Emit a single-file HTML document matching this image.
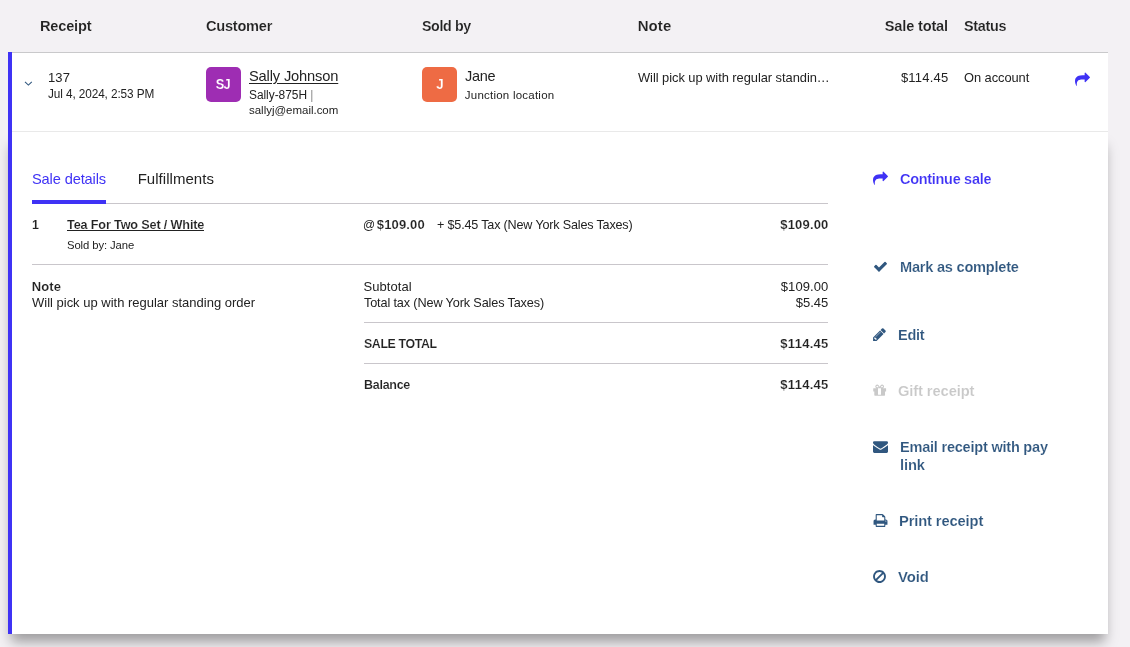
<!DOCTYPE html>
<html lang="en">
<head>
<meta charset="utf-8">
<title>Sales history</title>
<style>
html,body{margin:0;padding:0;}
body{width:1130px;height:647px;overflow:hidden;background:#f3f1f4;position:relative;font-family:"Liberation Sans",Arial,sans-serif;}
.t{position:absolute;white-space:pre;line-height:20px;height:20px;}
.abs{position:absolute;}
.hline{position:absolute;height:1px;background:#c9c6cb;}
svg{position:absolute;overflow:visible;}
</style>
</head>
<body>
<!-- header bottom border -->
<div class="abs" style="left:8px;top:52px;width:1100px;height:1px;background:#c9c9cb;"></div>
<!-- detail panel with shadow -->
<div class="abs" style="left:8px;top:132px;width:1100px;height:502px;background:#fff;box-shadow:0 11px 12px -3px rgba(0,0,0,.35);"></div>
<!-- row -->
<div class="abs" style="left:8px;top:53px;width:1100px;height:79px;background:#fff;"></div>
<div class="abs" style="left:12px;top:131px;width:1096px;height:1px;background:#e9e9e9;"></div>
<!-- blue bar -->
<div class="abs" style="left:8px;top:52px;width:4px;height:582px;background:#3f32f5;"></div>

<!-- chevron -->
<svg style="left:24px;top:80px;" width="9" height="7" viewBox="0 0 9 7"><polyline points="1.0,1.9 4.4,5.1 7.8,1.9" fill="none" stroke="#30577f" stroke-width="1.1"/></svg>

<!-- avatars -->
<div class="abs" style="left:206px;top:67px;width:35px;height:35px;border-radius:5px;background:#9e2db3;"></div>
<div class="abs" style="left:422px;top:67px;width:35px;height:35px;border-radius:5px;background:#ee6b44;"></div>

<!-- tab underline + lines -->
<div class="hline" style="left:32px;top:203px;width:796px;"></div>
<div class="abs" style="left:32px;top:200px;width:74px;height:4px;background:#3f32f5;"></div>
<div class="hline" style="left:32px;top:264px;width:796px;"></div>
<div class="hline" style="left:364px;top:322px;width:464px;"></div>
<div class="hline" style="left:364px;top:363px;width:464px;"></div>

<div class="abs" style="left:67px;top:230px;width:137px;height:1px;background:#222;"></div>
<!-- icons -->
<!-- share (row) -->
<svg style="left:1075px;top:72px;" width="15" height="15" viewBox="0 0 1792 1792"><path fill="#3f32f5" d="M1792 640q0 26-19 45l-512 512q-19 19-45 19t-45-19-19-45v-256h-224q-98 0-175.500 6t-154 21.500-133 42.500-105.500 69.500-80 101-48.500 138.500-17.500 181q0 55 5 123 0 6 2.500 23.500t2.500 26.500q0 15-8.500 25t-23.500 10q-16 0-28-17-7-9-13-22t-13.500-30-10.500-24q-127-285-127-451 0-199 53-333 162-403 875-403h224v-256q0-26 19-45t45-19 45 19l512 512q19 19 19 45z"/></svg>
<!-- share (continue sale) -->
<svg style="left:873px;top:171px;" width="15" height="15" viewBox="0 0 1792 1792"><path fill="#3f32f5" d="M1792 640q0 26-19 45l-512 512q-19 19-45 19t-45-19-19-45v-256h-224q-98 0-175.500 6t-154 21.500-133 42.500-105.500 69.500-80 101-48.500 138.500-17.500 181q0 55 5 123 0 6 2.500 23.500t2.500 26.500q0 15-8.500 25t-23.500 10q-16 0-28-17-7-9-13-22t-13.500-30-10.500-24q-127-285-127-451 0-199 53-333 162-403 875-403h224v-256q0-26 19-45t45-19 45 19l512 512q19 19 19 45z"/></svg>
<!-- check -->
<svg style="left:873px;top:259px;" width="15" height="15" viewBox="0 0 1792 1792"><path fill="#30577f" d="M1671 566q0 40-28 68l-724 724-136 136q-28 28-68 28t-68-28l-136-136-362-362q-28-28-28-68t28-68l136-136q28-28 68-28t68 28l294 295 656-657q28-28 68-28t68 28l136 136q28 28 28 68z"/></svg>
<!-- pencil -->
<svg style="left:872px;top:327px;" width="15" height="15" viewBox="0 0 1792 1792"><path fill="#30577f" d="M491 1536l91-91-235-235-91 91v107h128v128h107zm523-928q0-22-22-22-10 0-17 7l-542 542q-7 7-7 17 0 22 22 22 10 0 17-7l542-542q7-7 7-17zm-54-192l416 416-832 832h-416v-416zm683 96q0 53-37 90l-166 166-416-416 166-165q36-38 90-38 53 0 91 38l235 234q37 39 37 91z"/></svg>
<!-- gift -->
<svg style="left:872px;top:383px;" width="15" height="15" viewBox="0 0 1792 1792"><path fill="#c9c9c9" d="M1076 1356v-716h-360v716q0 25 18 38.500t46 13.500h232q28 0 46-13.500t18-38.500zm-456-844h195l-126-161q-26-31-69-31-40 0-68 28t-28 68 28 68 68 28zm688-96q0-40-28-68t-68-28q-43 0-69 31l-125 161h194q40 0 68-28t28-68zm376 256v320q0 14-9 23t-23 9h-96v416q0 40-28 68t-68 28h-1088q-40 0-68-28t-28-68v-416h-96q-14 0-23-9t-9-23v-320q0-14 9-23t23-9h440q-93 0-158.500-65.500t-65.500-158.500 65.500-158.500 158.500-65.500q107 0 168 77l128 165 128-165q61-77 168-77 93 0 158.500 65.500t65.500 158.500-65.500 158.500-158.500 65.500h440q14 0 23 9t9 23z"/></svg>
<!-- envelope -->
<svg style="left:873px;top:439px;" width="15" height="15" viewBox="0 0 1792 1792"><path fill="#30577f" d="M1792 710v794q0 66-47 113t-113 47h-1472q-66 0-113-47t-47-113v-794q44 49 101 87 362 246 497 345 57 42 92.500 65.500t94.500 48 110 24.500h2q51 0 110-24.500t94.500-48 92.500-65.500q170-123 498-345 57-39 100-87zm0-294q0 79-49 151t-122 123q-376 261-468 325-10 7-42.500 30.500t-54 38-52 32.500-57.500 27-50 9h-2q-23 0-50-9t-57.500-27-52-32.500-54-38-42.500-30.500q-91-64-262-182.500t-205-142.500q-62-42-117-115.500t-55-136.500q0-78 41.500-130t118.500-52h1472q65 0 112.500 47t47.500 113z"/></svg>
<!-- print -->
<svg style="left:872.5px;top:513px;" width="15" height="15" viewBox="0 0 1792 1792"><path fill="#30577f" d="M448 1536h896v-256h-896v256zm0-640h896v-384h-160q-40 0-68-28t-28-68v-160h-640v640zm1152 64q0-26-19-45t-45-19-45 19-19 45 19 45 45 19 45-19 19-45zm128 0v416q0 13-9.500 22.500t-22.500 9.500h-224v160q0 40-28 68t-68 28h-960q-40 0-68-28t-28-68v-160h-224q-13 0-22.500-9.500t-9.500-22.500v-416q0-79 56.500-135.500t135.500-56.500h64v-544q0-40 28-68t68-28h672q40 0 88 20t76 48l152 152q28 28 48 76t20 88v256h64q79 0 135.500 56.500t56.500 135.500z"/></svg>
<!-- ban -->
<svg style="left:872px;top:569px;" width="15" height="15" viewBox="0 0 1792 1792"><path fill="#30577f" d="M1440 893q0-161-87-295l-754 753q137 89 297 89 111 0 211.500-43.500t173.500-116.500 116-174.500 43-212.500zm-999 299l755-754q-135-91-300-91-148 0-273 73t-198 199-73 274q0 162 89 299zm1223-299q0 157-61 300t-163.500 246-245 164-298.500 61-298.500-61-245-164-163.500-246-61-300 61-299.500 163.500-245.500 245-164 298.500-61 298.500 61 245 164 163.500 245.500 61 299.500z"/></svg>

<div id="txt" style="position:absolute;left:0;top:0;width:1130px;height:647px;will-change:transform;">
<span class="t" style="left:39.65px;top:16.00px;font-size:15px;font-weight:700;color:#222222;letter-spacing:-0.205px;transform:scaleX(0.9735);transform-origin:left center;-webkit-text-stroke:0.15px #f3f1f4;">Receipt</span>
<span class="t" style="left:205.65px;top:16.00px;font-size:15px;font-weight:700;color:#222222;letter-spacing:-0.245px;transform:scaleX(0.9720);transform-origin:left center;-webkit-text-stroke:0.15px #f3f1f4;">Customer</span>
<span class="t" style="left:421.85px;top:16.00px;font-size:15px;font-weight:700;color:#222222;letter-spacing:-0.397px;transform:scaleX(0.9486);transform-origin:left center;-webkit-text-stroke:0.15px #f3f1f4;">Sold by</span>
<span class="t" style="left:637.65px;top:16.00px;font-size:15px;font-weight:700;color:#222222;letter-spacing:0.102px;-webkit-text-stroke:0.15px #f3f1f4;">Note</span>
<span class="t" style="left:883.33px;top:16.00px;font-size:15px;font-weight:700;color:#222222;letter-spacing:-0.179px;transform:scaleX(0.9731);transform-origin:right center;-webkit-text-stroke:0.15px #f3f1f4;">Sale total</span>
<span class="t" style="left:963.65px;top:16.00px;font-size:15px;font-weight:700;color:#222222;letter-spacing:-0.297px;transform:scaleX(0.9611);transform-origin:left center;-webkit-text-stroke:0.15px #f3f1f4;">Status</span>
<span class="t" style="left:47.95px;top:68.00px;font-size:13px;font-weight:400;color:#222222;letter-spacing:0.116px;">137</span>
<span class="t" style="left:47.80px;top:84.00px;font-size:12px;font-weight:400;color:#222222;letter-spacing:-0.098px;transform:scaleX(0.9822);transform-origin:left center;">Jul 4, 2024, 2:53 PM</span>
<span class="t" style="left:215.42px;top:74.00px;font-size:14px;font-weight:700;color:#ffffff;letter-spacing:-0.684px;transform:scale(0.9202,1.1);transform-origin:center 15px;-webkit-text-stroke:0.15px #9e2db3;">SJ</span>
<span class="t" style="left:248.55px;top:66.00px;font-size:15px;font-weight:400;color:#222222;letter-spacing:-0.162px;transform:scaleX(0.9775);transform-origin:left center;text-decoration:underline;text-underline-offset:1.5px;text-decoration-thickness:1px;">Sally Johnson</span>
<span class="t" style="left:248.70px;top:85.00px;font-size:12px;font-weight:400;color:#222222;letter-spacing:-0.036px;transform:scaleX(0.9934);transform-origin:left center;">Sally-875H <span style="color:#8a8a8a">|</span></span>
<span class="t" style="left:248.73px;top:100.00px;font-size:11.5px;font-weight:400;color:#222222;letter-spacing:-0.011px;transform:scaleX(0.9980);transform-origin:left center;">sallyj@email.com</span>
<span class="t" style="left:436.08px;top:74.00px;font-size:14px;font-weight:700;color:#ffffff;letter-spacing:-0.357px;transform:scale(0.9543,1.1);transform-origin:center 15px;-webkit-text-stroke:0.15px #ee6b44;">J</span>
<span class="t" style="left:464.65px;top:66.00px;font-size:15px;font-weight:400;color:#222222;letter-spacing:-0.277px;transform:scaleX(0.9659);transform-origin:left center;">Jane</span>
<span class="t" style="left:464.82px;top:85.00px;font-size:11.5px;font-weight:400;color:#222222;letter-spacing:0.230px;">Junction location</span>
<span class="t" style="left:637.75px;top:68.00px;font-size:13px;font-weight:400;color:#222222;letter-spacing:-0.051px;transform:scaleX(0.9912);transform-origin:left center;">Will pick up with regular standin…</span>
<span class="t" style="left:900.90px;top:68.00px;font-size:13px;font-weight:400;color:#222222;letter-spacing:0.231px;">$114.45</span>
<span class="t" style="left:963.75px;top:68.00px;font-size:13px;font-weight:400;color:#222222;letter-spacing:-0.063px;transform:scaleX(0.9906);transform-origin:left center;">On account</span>
<span class="t" style="left:31.65px;top:169.00px;font-size:15px;font-weight:400;color:#3f32f5;letter-spacing:-0.152px;transform:scaleX(0.9764);transform-origin:left center;">Sale details</span>
<span class="t" style="left:137.65px;top:169.00px;font-size:15px;font-weight:400;color:#222222;letter-spacing:0.041px;">Fulfillments</span>
<span class="t" style="left:32.35px;top:215.00px;font-size:13px;font-weight:700;color:#222222;letter-spacing:-0.298px;transform:scaleX(0.9588);transform-origin:left center;-webkit-text-stroke:0.15px #fff;">1</span>
<span class="t" style="left:66.75px;top:215.00px;font-size:13px;font-weight:700;color:#222222;letter-spacing:-0.164px;transform:scaleX(0.9739);transform-origin:left center;-webkit-text-stroke:0.15px #fff;">Tea For Two Set / White</span>
<span class="t" style="left:66.83px;top:235.00px;font-size:11.5px;font-weight:400;color:#222222;letter-spacing:-0.098px;transform:scaleX(0.9818);transform-origin:left center;">Sold by: Jane</span>
<span class="t" style="left:363.35px;top:215.00px;font-size:13px;font-weight:400;color:#222222;letter-spacing:-1.124px;transform:scaleX(0.9148);transform-origin:left center;">@</span>
<span class="t" style="left:376.75px;top:215.00px;font-size:13px;font-weight:700;color:#222222;letter-spacing:0.150px;-webkit-text-stroke:0.15px #fff;">$109.00</span>
<span class="t" style="left:436.95px;top:215.00px;font-size:13px;font-weight:400;color:#222222;letter-spacing:-0.187px;transform:scaleX(0.9694);transform-origin:left center;">+ $5.45 Tax (New York Sales Taxes)</span>
<span class="t" style="left:780.25px;top:215.00px;font-size:13px;font-weight:700;color:#222222;letter-spacing:0.179px;-webkit-text-stroke:0.15px #fff;">$109.00</span>
<span class="t" style="left:31.75px;top:277.00px;font-size:13px;font-weight:700;color:#222222;letter-spacing:0.090px;-webkit-text-stroke:0.15px #fff;">Note</span>
<span class="t" style="left:31.75px;top:293.00px;font-size:13px;font-weight:400;color:#222222;letter-spacing:-0.003px;transform:scaleX(0.9995);transform-origin:left center;">Will pick up with regular standing order</span>
<span class="t" style="left:363.55px;top:277.00px;font-size:13px;font-weight:400;color:#222222;letter-spacing:0.043px;">Subtotal</span>
<span class="t" style="left:363.55px;top:293.00px;font-size:13px;font-weight:400;color:#222222;letter-spacing:-0.143px;transform:scaleX(0.9758);transform-origin:left center;">Total tax (New York Sales Taxes)</span>
<span class="t" style="left:780.76px;top:277.00px;font-size:13px;font-weight:400;color:#222222;letter-spacing:0.093px;">$109.00</span>
<span class="t" style="left:795.69px;top:293.00px;font-size:13px;font-weight:400;color:#222222;letter-spacing:0.021px;">$5.45</span>
<span class="t" style="left:363.55px;top:334.00px;font-size:13px;font-weight:700;color:#222222;letter-spacing:-0.398px;transform:scaleX(0.9505);transform-origin:left center;-webkit-text-stroke:0.15px #fff;">SALE TOTAL</span>
<span class="t" style="left:780.35px;top:334.00px;font-size:13px;font-weight:700;color:#222222;letter-spacing:0.281px;-webkit-text-stroke:0.15px #fff;">$114.45</span>
<span class="t" style="left:363.55px;top:375.00px;font-size:13px;font-weight:700;color:#222222;letter-spacing:-0.279px;transform:scaleX(0.9609);transform-origin:left center;-webkit-text-stroke:0.15px #fff;">Balance</span>
<span class="t" style="left:780.35px;top:375.00px;font-size:13px;font-weight:700;color:#222222;letter-spacing:0.281px;-webkit-text-stroke:0.15px #fff;">$114.45</span>
<span class="t" style="left:899.85px;top:169.00px;font-size:15px;font-weight:700;color:#3f32f5;letter-spacing:-0.283px;transform:scaleX(0.9627);transform-origin:left center;-webkit-text-stroke:0.15px #fff;">Continue sale</span>
<span class="t" style="left:899.85px;top:257.00px;font-size:15px;font-weight:700;color:#30577f;letter-spacing:-0.226px;transform:scaleX(0.9712);transform-origin:left center;-webkit-text-stroke:0.15px #fff;">Mark as complete</span>
<span class="t" style="left:897.85px;top:325.00px;font-size:15px;font-weight:700;color:#30577f;letter-spacing:-0.254px;transform:scaleX(0.9642);transform-origin:left center;-webkit-text-stroke:0.15px #fff;">Edit</span>
<span class="t" style="left:897.85px;top:381.00px;font-size:15px;font-weight:700;color:#c9c9c9;letter-spacing:-0.119px;transform:scaleX(0.9819);transform-origin:left center;-webkit-text-stroke:0.15px #fff;">Gift receipt</span>
<span class="t" style="left:899.85px;top:437.00px;font-size:15px;font-weight:700;color:#30577f;letter-spacing:-0.227px;transform:scaleX(0.9684);transform-origin:left center;-webkit-text-stroke:0.15px #fff;">Email receipt with pay</span>
<span class="t" style="left:899.85px;top:455.00px;font-size:15px;font-weight:700;color:#30577f;letter-spacing:-0.138px;transform:scaleX(0.9786);transform-origin:left center;-webkit-text-stroke:0.15px #fff;">link</span>
<span class="t" style="left:898.85px;top:511.00px;font-size:15px;font-weight:700;color:#30577f;letter-spacing:-0.131px;transform:scaleX(0.9805);transform-origin:left center;-webkit-text-stroke:0.15px #fff;">Print receipt</span>
<span class="t" style="left:897.65px;top:567.00px;font-size:15px;font-weight:700;color:#30577f;letter-spacing:-0.080px;transform:scaleX(0.9897);transform-origin:left center;-webkit-text-stroke:0.15px #fff;">Void</span>
</div>
</body>
</html>
